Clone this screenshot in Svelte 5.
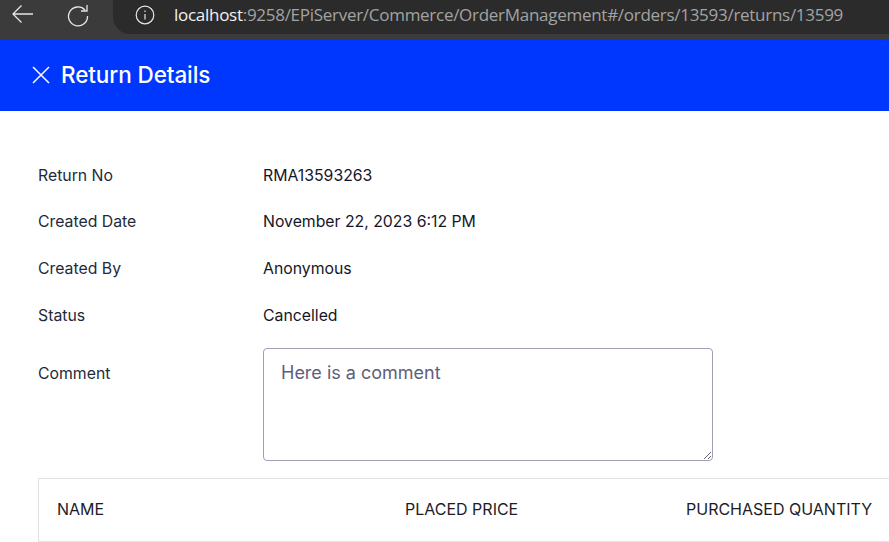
<script lang="ts">
  const details = [
    { label: "Return No", value: "RMA13593263" },
    { label: "Created Date", value: "November 22, 2023 6:12 PM" },
    { label: "Created By", value: "Anonymous" },
    { label: "Status", value: "Cancelled" },
  ];
  const columns = ["NAME", "PLACED PRICE", "PURCHASED QUANTITY"];
</script>

<div class="page">
  <div class="browser">
    <svg class="back" width="24" height="24" viewBox="0 0 24 24" fill="none" stroke="#e6e6e6" stroke-width="1.3">
      <path d="M2 11h20M10.5 2.5 2 11l8.5 8.5" />
    </svg>
    <svg class="reload" width="24" height="24" viewBox="0 0 24 24" fill="none" stroke="#e6e6e6" stroke-width="1.3">
      <path d="M18 7A9.5 9.5 0 1 0 20.5 13" />
      <path d="M20 2v6h-6" />
    </svg>
    <div class="address">
      <svg class="info" width="20" height="20" viewBox="0 0 20 20" fill="none" stroke="#e6e6e6" stroke-width="1.2">
        <circle cx="10" cy="10" r="8.8" />
        <path d="M10 9v5.5M10 5.5v1.4" />
      </svg>
      <span class="url"><span class="host">localhost</span>:9258/EPiServer/Commerce/OrderManagement#/orders/13593/returns/13599</span>
    </div>
  </div>

  <header class="titlebar">
    <svg width="20" height="20" viewBox="0 0 20 20" fill="none" stroke="#fff" stroke-width="1.5">
      <path d="M2 2l16 16M18 2 2 18" />
    </svg>
    <h1>Return Details</h1>
  </header>

  <main class="content">
    <dl class="fields">
      {#each details as row}
        <dt>{row.label}</dt>
        <dd>{row.value}</dd>
      {/each}
      <dt class="comment-label">Comment</dt>
      <dd class="comment-value">
        <textarea readonly>Here is a comment</textarea>
      </dd>
    </dl>

    <div class="table-head">
      {#each columns as col}
        <div class="col">{col}</div>
      {/each}
    </div>
  </main>
</div>

<style>
  :global(body) {
    margin: 0;
    background: #fff;
  }

  .page {
    width: 889px;
    height: 542px;
    overflow: hidden;
    font-family: Inter, "Liberation Sans", sans-serif;
  }

  .browser {
    height: 39px;
    background: #3b3b3b;
    display: flex;
    align-items: flex-start;
    padding-left: 11px;
    box-sizing: border-box;
  }

  .back {
    margin-top: 3px;
    flex: none;
  }

  .reload {
    margin: 3px 0 0 32px;
    flex: none;
  }

  .address {
    margin-left: 22px;
    flex: 1;
    height: 34px;
    background: #2b2b2b;
    border-radius: 0 0 0 17px;
    display: flex;
    align-items: center;
    padding-left: 22px;
    box-sizing: border-box;
    white-space: nowrap;
    overflow: hidden;
  }

  .info {
    flex: none;
    position: relative;
    top: -2px;
  }

  .url {
    margin-left: 19px;
    font-family: "Open Sans", sans-serif;
    font-size: 17px;
    letter-spacing: -0.28px;
    color: #a3a3a3;
    position: relative;
    top: -3px;
  }

  .host {
    color: #f2f2f2;
  }

  .titlebar {
    height: 72px;
    background: #0037ff;
    display: flex;
    align-items: center;
    gap: 10px;
    padding-left: 31px;
    padding-bottom: 1px;
    box-sizing: border-box;
    color: #fff;
  }

  .titlebar svg {
    position: relative;
    top: 0.5px;
  }

  h1 {
    margin: 0;
    font-size: 22.5px;
    font-weight: 550;
    letter-spacing: -0.1px;
  }

  .content {
    padding: 41px 0 0 38px;
  }

  .fields {
    display: grid;
    grid-template-columns: 225px 450px;
    grid-template-rows: repeat(4, 46.6px) auto;
    margin: 0;
    font-size: 15.8px;
    color: #161629;
    align-items: center;
  }

  dt, dd {
    margin: 0;
  }

  dt {
    color: #1e2a3c;
  }

  .comment-label {
    align-self: start;
    margin-top: 25.6px;
  }

  .comment-value {
    align-self: start;
    margin-top: 9.6px;
  }

  textarea {
    display: block;
    width: 450px;
    height: 113px;
    box-sizing: border-box;
    border: 1px solid #a09fb5;
    border-radius: 4px;
    padding: 13px 17px;
    font: 18px Inter, "Liberation Sans", sans-serif;
    color: #5e5e7d;
    outline: none;
  }

  .table-head {
    margin-top: 17px;
    width: 880px;
    height: 64px;
    box-sizing: border-box;
    border: 1px solid #e2e2e2;
    display: grid;
    grid-template-columns: 348px 281px 1fr;
    align-items: center;
    padding: 0 0 2px 18px;
    font-size: 16px;
    color: #1c1c28;
    white-space: nowrap;
  }
</style>
